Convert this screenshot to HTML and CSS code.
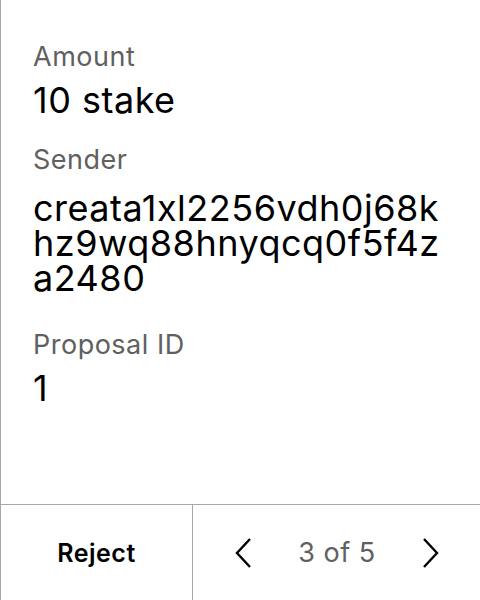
FILE: index.html
```html
<!DOCTYPE html>
<html>
<head>
<meta charset="utf-8">
<link rel="stylesheet" href="styles.css">
</head>
<body>
<div class="screen">
  <div class="content">
    <div class="field">
      <div class="label">Amount</div>
      <div class="value">10 stake</div>
    </div>
    <div class="field">
      <div class="label">Sender</div>
      <div class="value addr">creata1xl2256vdh0j68khz9wq88hnyqcq0f5f4za2480</div>
    </div>
    <div class="field">
      <div class="label">Proposal ID</div>
      <div class="value">1</div>
    </div>
  </div>
  <div class="footer">
    <div class="reject">Reject</div>
    <div class="pager">
      <svg class="chev" width="16" height="30" viewBox="0 0 16 30"><path d="M15 1 L2 15 L15 29" fill="none" stroke="#000" stroke-width="2.4"/></svg>
      <span class="count">3 of 5</span>
      <svg class="chev" width="16" height="30" viewBox="0 0 16 30"><path d="M1 1 L14 15 L1 29" fill="none" stroke="#000" stroke-width="2.4"/></svg>
    </div>
  </div>
</div>
</body>
</html>
```

FILE: styles.css
```css
html, body {
  margin: 0;
  padding: 0;
  background: #fff;
}
.screen {
  width: 480px;
  height: 600px;
  box-sizing: border-box;
  border-left: 1px solid #a8a8a8;
  display: flex;
  flex-direction: column;
  font-family: Inter, "Noto Sans", sans-serif;
  color: #000;
}
.content {
  flex: 1;
  padding: 40px 32px 0 32px;
  display: flex;
  flex-direction: column;
  gap: 17px;
}
.label {
  font-size: 27px;
  line-height: 34px;
  letter-spacing: 0.5px;
  color: #606060;
}
.value {
  font-size: 36px;
  line-height: 52px;
  letter-spacing: 0.5px;
}
.addr {
  word-break: break-all;
  line-height: 35px;
  padding-top: 14px;
  padding-bottom: 15px;
}
.footer {
  height: 96px;
  box-sizing: border-box;
  border-top: 1px solid #a8a8a8;
  display: flex;
}
.reject {
  width: 191px;
  border-right: 1px solid #a8a8a8;
  display: flex;
  align-items: center;
  justify-content: center;
  font-size: 25px;
  font-weight: 600;
  letter-spacing: 0.5px;
}
.pager {
  flex: 1;
  display: flex;
  align-items: center;
  justify-content: space-between;
  padding: 0 41px 0 42px;
}
.count {
  font-size: 27px;
  letter-spacing: 0.5px;
  color: #606060;
}
```
